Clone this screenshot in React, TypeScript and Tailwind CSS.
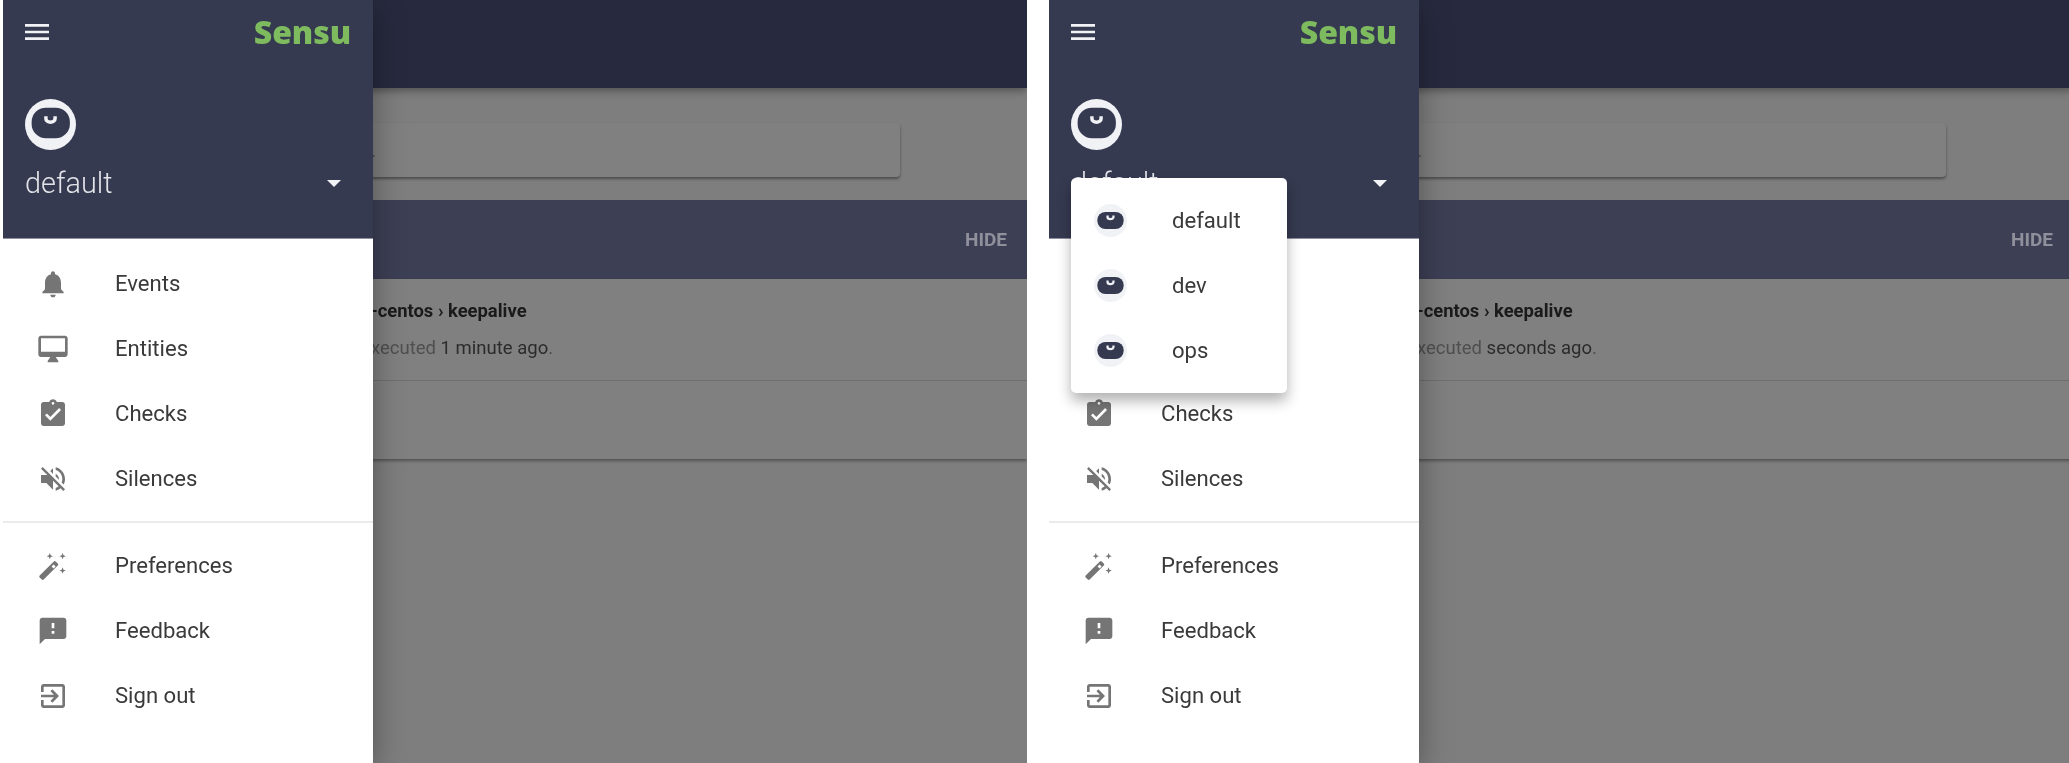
import React from "react";

const roboto = "font-['Roboto',sans-serif]";

function Mi({ d, className = "" }: { d: string; className?: string }) {
  return (
    <svg viewBox="0 0 24 24" className={`w-8 h-8 shrink-0 fill-[#757575] ${className}`}>
      <path d={d} />
    </svg>
  );
}

function Wand() {
  const star = (x: number, y: number, r: number) =>
    `M${x} ${y - r}L${x + r * 0.28} ${y - r * 0.28}L${x + r} ${y}L${x + r * 0.28} ${y + r * 0.28}L${x} ${y + r}L${x - r * 0.28} ${y + r * 0.28}L${x - r} ${y}L${x - r * 0.28} ${y - r * 0.28}Z`;
  return (
    <svg viewBox="0 0 24 24" className="w-8 h-8 shrink-0 fill-[#757575]">
      <path d={star(9.6, 4.6, 2.4)} />
      <path d={star(19.2, 4.6, 2.4)} />
      <path d={star(19.2, 15.4, 2.4)} />
      <path d="M12.6 8.6a1 1 0 011.4 0l1.6 1.6a1 1 0 010 1.4L5 22.2a1 1 0 01-1.4 0L2 20.6a1 1 0 010-1.4L12.6 8.6zM12.4 10.8l-1.5 1.5 1.6 1.6 1.5-1.5z" fillRule="evenodd" />
    </svg>
  );
}

function Avatar() {
  return (
    <svg viewBox="0 0 50 50" className="shrink-0 w-[51px] h-[51px]">
      <circle cx="25" cy="25" r="25" fill="#f0f2f6" />
      <rect x="6.5" y="8.5" width="37.5" height="30" rx="14" fill="#363a50" />
      <path d="M20.5 17v2.4a4.5 3.4 0 0 0 9 0V17" fill="none" stroke="#f0f2f6" strokeWidth="3.4" />
    </svg>
  );
}

function SmallAvatar() {
  return (
    <svg viewBox="0 0 50 50" className="shrink-0 w-[33px] h-[33px]">
      <circle cx="25" cy="25" r="25" fill="#f0f2f6" />
      <rect x="5" y="12" width="40" height="26" rx="12.5" fill="#363a50" />
      <path d="M20.5 17.5v2.2a4.5 3.2 0 0 0 9 0v-2.2" fill="none" stroke="#f0f2f6" strokeWidth="3.4" />
    </svg>
  );
}

const icons = {
  menu: "M3 18h18v-2H3v2zm0-5h18v-2H3v2zm0-7v2h18V6H3z",
  events: "M12 22c1.1 0 2-.9 2-2h-4c0 1.1.89 2 2 2zm6-6v-5c0-3.07-1.64-5.64-4.5-6.32V4c0-.83-.67-1.5-1.5-1.5s-1.5.67-1.5 1.5v.68C7.63 5.36 6 7.92 6 11v5l-2 2v1h16v-1l-2-2z",
  entities: "M21 2H3c-1.1 0-2 .9-2 2v12c0 1.1.9 2 2 2h7l-2 3v1h8v-1l-2-3h7c1.1 0 2-.9 2-2V4c0-1.1-.9-2-2-2zm0 12H3V4h18v10z",
  checks: "M19 3h-4.18C14.4 1.84 13.3 1 12 1c-1.3 0-2.4.84-2.82 2H5c-1.1 0-2 .9-2 2v14c0 1.1.9 2 2 2h14c1.1 0 2-.9 2-2V5c0-1.1-.9-2-2-2zm-7 0c.55 0 1 .45 1 1s-.45 1-1 1-1-.45-1-1 .45-1 1-1zm-2 14l-4-4 1.41-1.41L10 14.17l6.59-6.59L18 9l-8 8z",
  silences: "M16.5 12c0-1.77-1.02-3.29-2.5-4.03v2.21l2.45 2.45c.03-.2.05-.41.05-.63zm2.5 0c0 .94-.2 1.82-.54 2.64l1.51 1.51C20.63 14.91 21 13.5 21 12c0-4.28-2.99-7.86-7-8.77v2.06c2.89.86 5 3.54 5 6.71zM4.27 3L3 4.27 7.73 9H3v6h4l5 5v-6.73l4.25 4.25c-.67.52-1.42.93-2.25 1.18v2.06c1.38-.31 2.63-.95 3.69-1.81L19.73 21 21 19.73l-9-9L4.27 3zM12 4L9.91 6.09 12 8.18V4z",
  feedback: "M20 2H4c-1.1 0-1.99.9-1.99 2L2 22l4-4h14c1.1 0 2-.9 2-2V4c0-1.1-.9-2-2-2zm-7 12h-2v-2h2v2zm0-4h-2V6h2v4z",
  signout: "M10.09 15.59L11.5 17l5-5-5-5-1.41 1.41L12.67 11H3v2h9.67l-2.58 2.59zM19 3H5c-1.11 0-2 .9-2 2v4h2V5h14v14H5v-4H3v4c0 1.1.89 2 2 2h14c1.1 0 2-.9 2-2V5c0-1.1-.9-2-2-2z",
};

function NavRow({ icon, label }: { icon: React.ReactNode; label: string }) {
  return (
    <div className="flex items-center h-[65px] pl-[34px] gap-[46px] text-[22.1px] text-[#3a3a3a]">
      {icon}
      <span>{label}</span>
    </div>
  );
}

function Drawer({ menu }: { menu: boolean }) {
  return (
    <aside className="absolute left-0 top-0 bottom-0 w-[370px] bg-white shadow-[0_8px_30px_rgba(0,0,0,0.35)] flex flex-col">
      <header className="h-[239px] bg-[#363a50] flex flex-col shrink-0 border-b border-[#8f91a0]">
        <div className="flex items-center justify-between h-[64px] pl-[18px] pr-[22px]">
          <svg viewBox="0 0 24 24" className="w-8 h-8 fill-[#f2f3f6]">
            <path d={icons.menu} />
          </svg>
          <span className="font-['Open_Sans',sans-serif] font-extrabold text-[32px] leading-none tracking-[-0.1px] text-[#7dbb5e]">Sensu</span>
        </div>
        <div className="pl-[22px] mt-[35px]">
          <Avatar />
        </div>
        <div className="flex items-center justify-between pl-[22px] pr-[32px] mt-[15px]">
          <span className="text-[28.8px] font-light leading-[36px] text-[#e2e3e8]">default</span>
          <svg viewBox="0 0 14 7" className="w-[14px] h-[7px] fill-[#f2f3f6]">
            <path d="M0 0h14L7 7z" />
          </svg>
        </div>
      </header>
      <nav className="pt-[12px] flex flex-col">
        <NavRow icon={<Mi d={icons.events} />} label="Events" />
        <NavRow icon={<Mi d={icons.entities} />} label="Entities" />
        <NavRow icon={<Mi d={icons.checks} />} label="Checks" />
        <NavRow icon={<Mi d={icons.silences} />} label="Silences" />
        <div className="h-[2px] bg-[#ebebeb] mt-[10px] mb-[10px]" />
        <NavRow icon={<Wand />} label="Preferences" />
        <NavRow icon={<Mi d={icons.feedback} />} label="Feedback" />
        <NavRow icon={<Mi d={icons.signout} />} label="Sign out" />
      </nav>
      {menu && (
        <div className="absolute left-[22px] top-[178px] w-[216px] h-[215px] bg-white rounded-[5px] shadow-[0_8px_14px_rgba(0,0,0,0.3)] pt-[10px] flex flex-col">
          {["default", "dev", "ops"].map((n) => (
            <div key={n} className="flex items-center h-[65px] pl-[23px] gap-[45px] text-[22.1px] text-[#3a3a3a]">
              <SmallAvatar />
              <span>{n}</span>
            </div>
          ))}
        </div>
      )}
    </aside>
  );
}

function Screen({ ago, menu }: { ago: string; menu: boolean }) {
  return (
    <section className="relative w-[1024px] h-[763px] shrink-0 overflow-hidden bg-[#7e7e7e]">
      <div className="h-[88px] bg-[#272a3e] shadow-[0_3px_8px_rgba(0,0,0,0.35)]" />
      <div className="mt-[35px] ml-[16px] mr-[127px] h-[54px] rounded-[4px] bg-[#808080] shadow-[0_2px_3px_rgba(0,0,0,0.4)] flex items-center pl-[280px] text-[20px] text-[#555]">
        Search...
      </div>
      <div className="mt-[23px] h-[79px] bg-[#3d3f55] flex items-center justify-end pr-[20px]">
        <span className="relative top-[1px] font-bold text-[19px] text-[#8f909b]">HIDE</span>
      </div>
      <div className="h-[180px] bg-[#808080] shadow-[0_2px_3px_rgba(0,0,0,0.35)]">
        <div className="h-[102px] border-b border-[#6f6f6f] pl-[318px] pt-[20px]">
          <div className="font-bold text-[18.4px] leading-[24px] text-[#1a1a1a]">sensu-centos › keepalive</div>
          <div className="text-[18.5px] leading-[24px] mt-[13px] text-[#4f4f4f]">
            Last executed <span className="text-[#2b2b2b]">{ago}</span>.
          </div>
        </div>
      </div>
      <Drawer menu={menu} />
    </section>
  );
}

export default function App() {
  return (
    <div className={`${roboto} w-full h-[763px] overflow-hidden bg-white flex pl-[3px] gap-[22px] blur-[0.4px]`}>
      <Screen ago="1 minute ago" menu={false} />
      <Screen ago="seconds ago" menu={true} />
    </div>
  );
}
